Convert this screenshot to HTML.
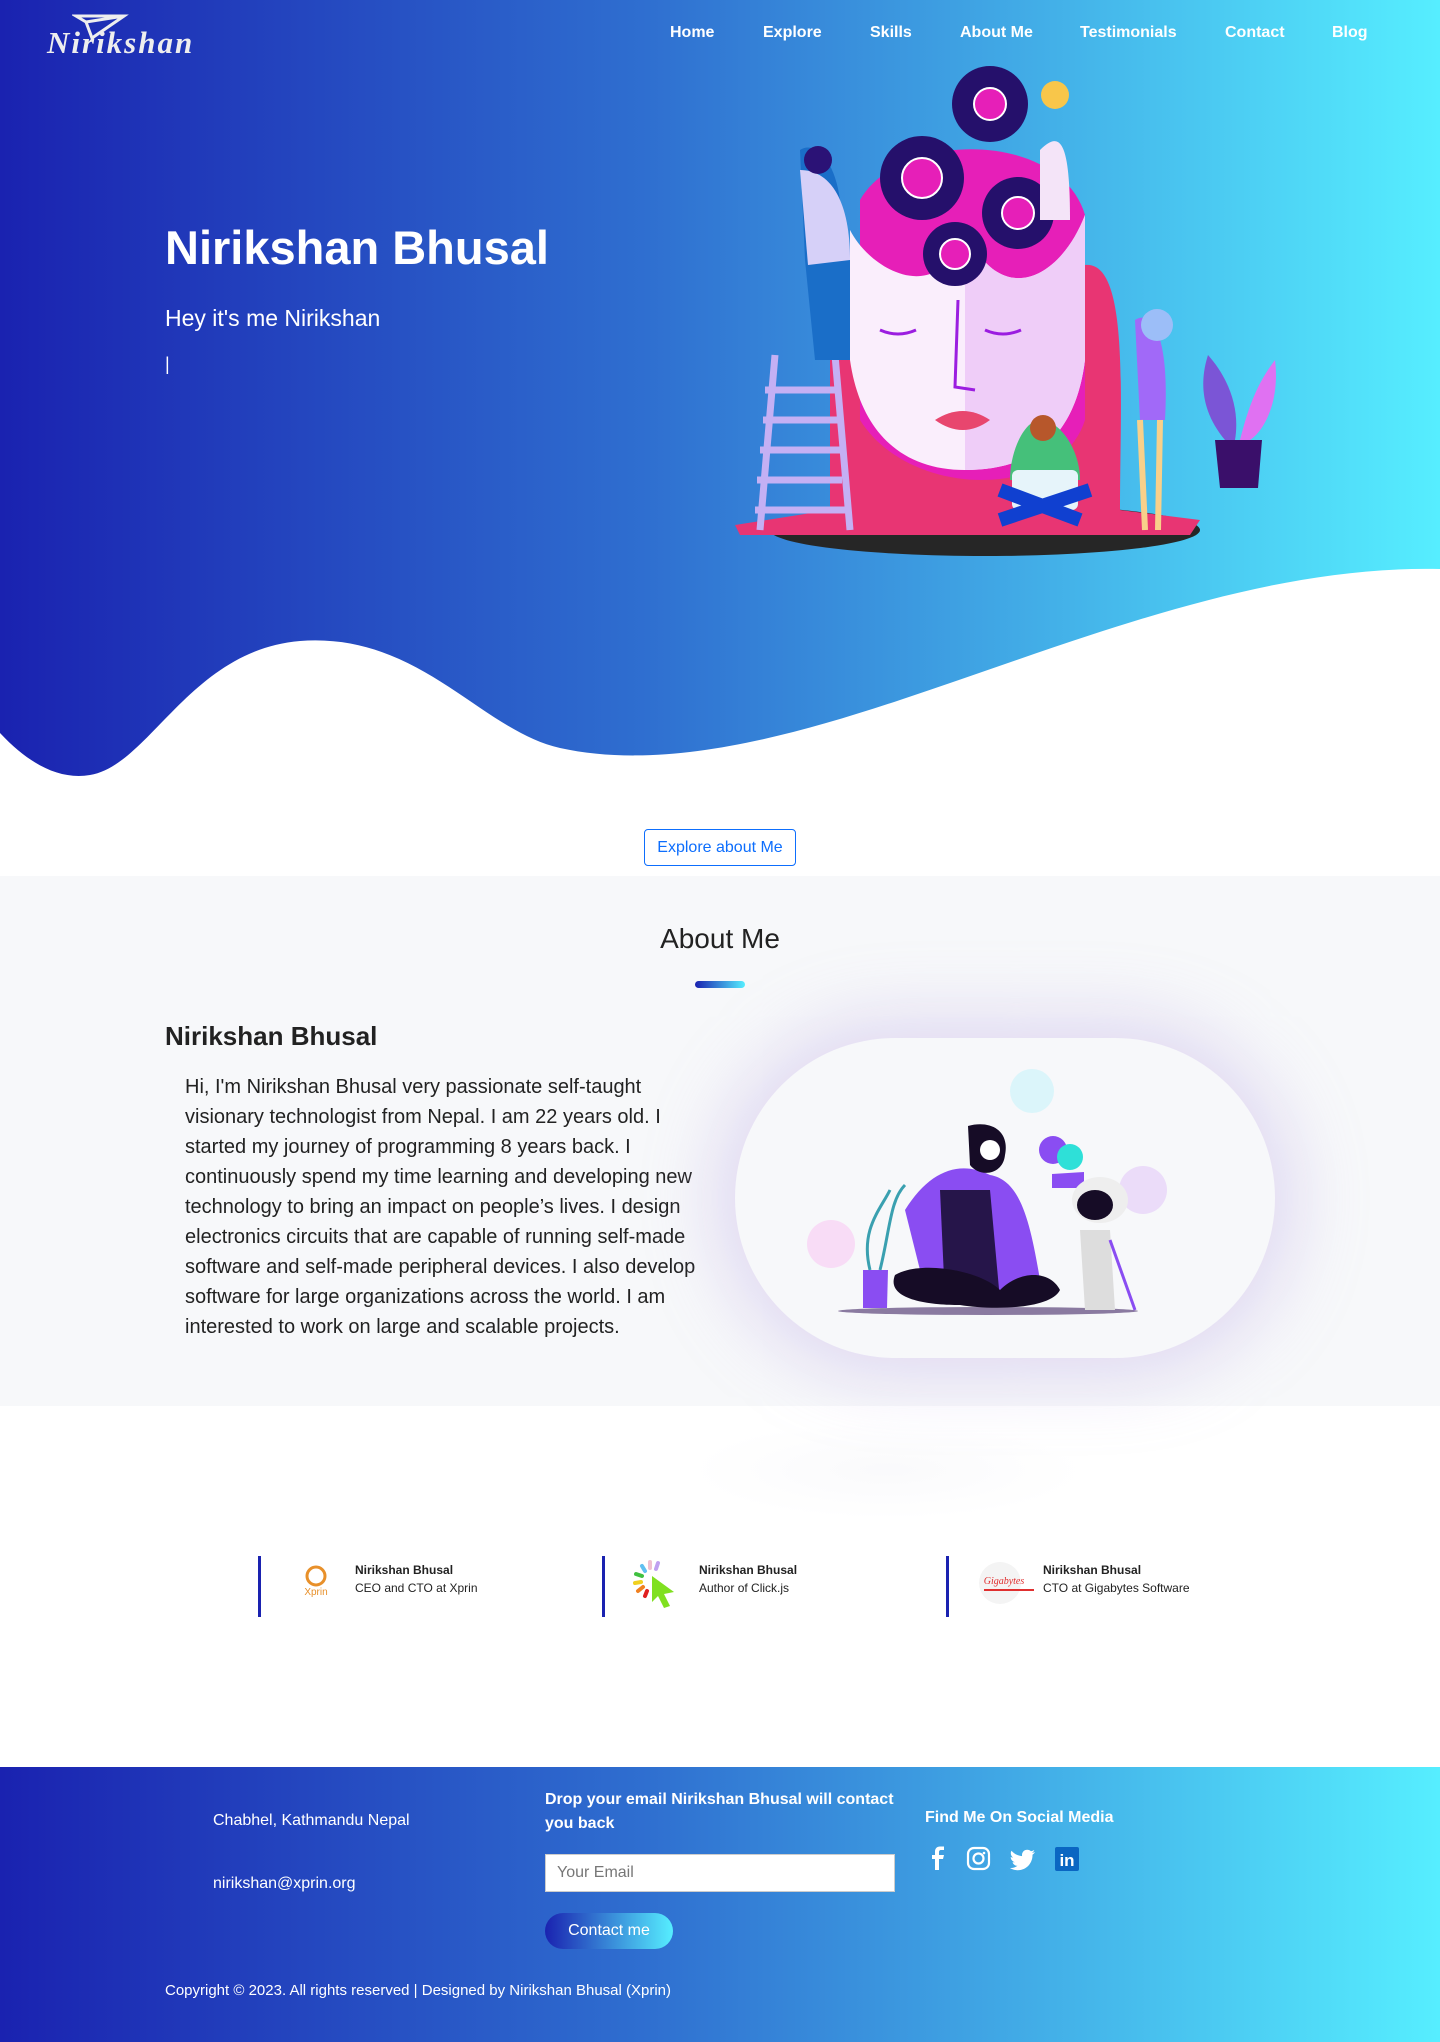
<!DOCTYPE html>
<html><head><meta charset="utf-8">
<style>
*{margin:0;padding:0;box-sizing:border-box}
body{width:1440px;height:2042px;font-family:"Liberation Sans",sans-serif;background:#fff;position:relative;overflow:hidden;color:#212529}
.abs{position:absolute}
.grad{background:linear-gradient(90deg,#1a22b0 0%,#2f6fd0 45%,#56eeff 100%)}
.nav a{position:absolute;top:24px;color:#fff;font-weight:bold;font-size:16px;text-decoration:none}
</style></head><body>
<div class="abs grad" style="left:0;top:0;width:1440px;height:800px"></div>
<svg class="abs" style="left:0;top:560px" width="1440" height="260" viewBox="0 560 1440 260">
<path d="M0 733 C30 765 60 780 90 775 C150 765 190 650 300 641 C420 632 480 730 560 748 C660 770 780 740 900 700 C1080 640 1260 565 1440 569 L1440 820 L0 820 Z" fill="#fff"/>
</svg>
<!-- logo -->
<svg class="abs" style="left:72px;top:12px" width="60" height="30"><path d="M4 4 L52 4 L20 26 L14 10 Z M14 10 L52 4" fill="none" stroke="#eee" stroke-width="3"/></svg>
<div class="abs" style="left:47px;top:25px;color:#eee;font:italic bold 31px 'Liberation Serif',serif;letter-spacing:2px">Nirikshan</div>
<div class="nav">
<a style="left:670px">Home</a><a style="left:763px">Explore</a><a style="left:870px">Skills</a><a style="left:960px">About Me</a><a style="left:1080px">Testimonials</a><a style="left:1225px">Contact</a><a style="left:1332px">Blog</a>
</div>
<div class="abs" style="left:165px;top:220px;color:#fff;font-size:47px;font-weight:bold">Nirikshan Bhusal</div>
<div class="abs" style="left:165px;top:305px;color:#fff;font-size:23px">Hey it's me Nirikshan</div>
<div class="abs" style="left:165px;top:354px;color:#fff;font-size:18px">|</div>
<!-- hero illustration -->
<svg class="abs" style="left:730px;top:60px" width="560" height="510" viewBox="730 60 560 510">
<ellipse cx="985" cy="530" rx="215" ry="26" fill="#262626"/>
<path d="M1085 265 C1130 260 1120 400 1120 510 L1200 520 L1190 535 L740 535 L735 525 L830 510 L830 300 Z" fill="#e83573"/>
<path d="M860 200 C900 130 1060 130 1085 215 L1085 420 C1060 500 910 500 860 420 Z" fill="#e61fb8"/>
<path d="M850 230 C870 270 940 310 965 230 C1000 310 1060 280 1085 215 L1085 360 C1075 440 1030 470 965 470 C900 470 860 430 850 360 Z" fill="#faeefc"/>
<path d="M965 230 C1000 310 1060 280 1085 215 L1085 360 C1075 440 1030 470 965 470 Z" fill="#efcdf8"/>
<path d="M935 420 Q963 402 990 420 Q963 440 935 420Z" fill="#e8466e"/>
<path d="M880 330 q18 8 36 0 M985 330 q18 8 36 0 M958 300 L955 387 L975 390" stroke="#9b1de0" stroke-width="3" fill="none"/>
<g fill="#25106b"><circle cx="922" cy="178" r="42"/><circle cx="990" cy="104" r="38"/><circle cx="1018" cy="213" r="36"/><circle cx="955" cy="254" r="32"/></g>
<g fill="#e61fb8" stroke="#fff" stroke-width="2"><circle cx="922" cy="178" r="20"/><circle cx="990" cy="104" r="16"/><circle cx="1018" cy="213" r="16"/><circle cx="955" cy="254" r="15"/></g>
<path d="M775 355 L760 530 M835 355 L850 530 M765 390h70 M763 420h75 M760 450h80 M757 480h85 M755 510h90" stroke="#c4b0f4" stroke-width="7" fill="none"/>
<path d="M800 150 C815 140 835 160 840 200 L850 260 L850 360 L815 360 L805 260 Z" fill="#1a6ec8"/>
<path d="M800 170 C830 170 850 200 850 260 L808 265 Z" fill="#d6d0f8"/>
<circle cx="818" cy="160" r="14" fill="#2b1276"/>
<path d="M1040 150 C1060 130 1070 140 1070 220 L1040 220 Z" fill="#f4e4f8"/><circle cx="1055" cy="95" r="14" fill="#f8c64a"/>
<path d="M1135 320 C1150 310 1170 330 1165 420 L1140 420 Z" fill="#a169f8"/><path d="M1140 420 L1145 530 M1160 420 L1158 530" stroke="#f8d08a" stroke-width="6"/>
<circle cx="1157" cy="325" r="16" fill="#9cbef8"/>
<path d="M1040 420 C1060 420 1080 450 1080 480 L1010 480 C1010 450 1025 420 1040 420 Z" fill="#45c07a"/>
<rect x="1012" y="470" width="66" height="40" rx="6" fill="#e6f4fa"/>
<path d="M1000 520 L1090 490 M1080 520 L1000 490" stroke="#1040d0" stroke-width="14"/>
<circle cx="1043" cy="428" r="13" fill="#b7572b"/>
<path d="M1215 440 L1262 440 L1258 488 L1220 488 Z" fill="#3a0f6a"/>
<path d="M1225 440 C1200 410 1200 380 1208 355 C1230 380 1240 410 1235 440 Z" fill="#7b55d6"/>
<path d="M1240 440 C1250 400 1260 380 1275 360 C1280 400 1265 430 1250 440 Z" fill="#e071f2"/>
</svg>
<!-- Explore button -->
<div class="abs" style="left:644px;top:829px;width:152px;height:37px;border:1px solid #0d6efd;border-radius:4px;color:#0d6efd;font-size:16px;text-align:center;line-height:35px">Explore about Me</div>
<!-- About section -->
<div class="abs" style="left:0;top:876px;width:1440px;height:530px;background:#f7f8fa"></div>
<div class="abs" style="left:0;top:923px;width:1440px;text-align:center;font-size:28px;color:#222">About Me</div>
<div class="abs" style="left:695px;top:981px;width:50px;height:7px;border-radius:4px;background:linear-gradient(90deg,#1a22b0,#56eeff)"></div>
<div class="abs" style="left:165px;top:1021px;font-size:26px;font-weight:bold;color:#222">Nirikshan Bhusal</div>
<div class="abs" style="left:185px;top:1072px;width:525px;font-size:20px;line-height:30px;color:#222">Hi, I'm Nirikshan Bhusal very passionate self-taught visionary technologist from Nepal. I am 22 years old. I started my journey of programming 8 years back. I continuously spend my time learning and developing new technology to bring an impact on people’s lives. I design electronics circuits that are capable of running self-made software and self-made peripheral devices. I also develop software for large organizations across the world. I am interested to work on large and scalable projects.</div>
<div class="abs" style="left:735px;top:1038px;width:540px;height:320px;border-radius:160px;background:#f7f8fa;box-shadow:0 0 70px 20px rgba(180,160,225,0.35)"></div>
<svg class="abs" style="left:735px;top:1038px" width="540" height="320" viewBox="735 1038 540 320">
<circle cx="1032" cy="1091" r="22" fill="#c8f4fa" opacity=".6"/><circle cx="1143" cy="1190" r="24" fill="#e6d0f8" opacity=".7"/><circle cx="831" cy="1244" r="24" fill="#f8d0f4" opacity=".7"/>
<ellipse cx="988" cy="1311" rx="150" ry="4" fill="#8a7aa0"/>
<path d="M1052 1174 l32 -2 l0 16 l-32 0z" fill="#8a4df2"/><circle cx="1053" cy="1150" r="14" fill="#8a4df2"/><circle cx="1070" cy="1157" r="13" fill="#2ee0d8"/>
<path d="M863 1308 L863 1270 L888 1270 L887 1308 Z" fill="#8a4df2"/>
<path d="M870 1270 C860 1230 880 1210 890 1190 M880 1270 C890 1230 890 1200 905 1185" stroke="#3aa0b0" stroke-width="3" fill="none"/>
<path d="M905 1210 C930 1170 960 1160 990 1175 C1020 1180 1030 1220 1040 1280 L1000 1290 L960 1280 L920 1270 Z" fill="#8a4df2"/>
<path d="M940 1190 L990 1190 L1000 1300 L945 1300 Z" fill="#26154a"/>
<path d="M895 1275 C920 1260 980 1270 1000 1290 C1020 1270 1050 1270 1060 1290 C1050 1310 990 1310 960 1305 C930 1305 885 1300 895 1275 Z" fill="#160c26"/>
<path d="M968 1126 C990 1120 1010 1130 1005 1155 C1003 1175 980 1178 970 1165 Z" fill="#160c26"/><circle cx="990" cy="1150" r="10" fill="#fff"/>
<ellipse cx="1100" cy="1200" rx="28" ry="23" fill="#eee"/><ellipse cx="1095" cy="1205" rx="18" ry="15" fill="#160c26"/>
<path d="M1080 1230 L1110 1230 L1115 1310 L1085 1310 Z" fill="#ddd"/><path d="M1110 1240 L1135 1310" stroke="#8a4df2" stroke-width="3"/>
</svg>
<!-- testimonials -->
<div class="abs" style="left:688px;top:1420px;width:400px;height:100px;border-radius:50%;background:radial-gradient(ellipse,rgba(235,235,242,0.25),rgba(255,255,255,0) 70%)"></div>
<div class="abs" style="left:258px;top:1556px;width:3px;height:61px;background:#1a22b0"></div>
<div class="abs" style="left:602px;top:1556px;width:3px;height:61px;background:#1a22b0"></div>
<div class="abs" style="left:946px;top:1556px;width:3px;height:61px;background:#1a22b0"></div>
<svg class="abs" style="left:295px;top:1562px" width="42" height="42"><circle cx="21" cy="14" r="9" fill="none" stroke="#e8902a" stroke-width="3"/><text x="21" y="33" font-size="10" fill="#e8902a" text-anchor="middle" font-family="Liberation Sans">Xprin</text></svg>
<svg class="abs" style="left:630px;top:1558px" width="50" height="52"><g stroke-width="4" stroke-linecap="round"><path d="M20 4v6" stroke="#f0c0d0"/><path d="M28 5l-2 6" stroke="#c0a0f0"/><path d="M12 8l3 5" stroke="#60c0f0"/><path d="M6 16l6 2" stroke="#40c040"/><path d="M5 25l6 -1" stroke="#f0d020"/><path d="M8 33l5 -4" stroke="#f08020"/><path d="M15 38l2 -5" stroke="#e02020"/></g><path d="M22 18 L44 34 L34 36 L40 48 L34 50 L28 38 L22 44 Z" fill="#80e020"/></svg>
<svg class="abs" style="left:974px;top:1562px" width="60" height="42"><circle cx="26" cy="21" r="21" fill="#f4f4f4"/><text x="30" y="22" font-size="10" fill="#e03030" font-style="italic" text-anchor="middle" font-family="Liberation Serif">Gigabytes</text><path d="M10 28h50" stroke="#e03030" stroke-width="2"/></svg>
<div class="abs" style="left:355px;top:1561px;font-size:12px;line-height:18px;color:#222"><b>Nirikshan Bhusal</b><br>CEO and CTO at Xprin</div>
<div class="abs" style="left:699px;top:1561px;font-size:12px;line-height:18px;color:#222"><b>Nirikshan Bhusal</b><br>Author of Click.js</div>
<div class="abs" style="left:1043px;top:1561px;font-size:12px;line-height:18px;color:#222"><b>Nirikshan Bhusal</b><br>CTO at Gigabytes Software</div>
<!-- footer -->
<div class="abs grad" style="left:0;top:1767px;width:1440px;height:275px"></div>
<div class="abs" style="left:213px;top:1812px;color:#fff;font-size:16px">Chabhel, Kathmandu Nepal</div>
<div class="abs" style="left:213px;top:1875px;color:#fff;font-size:16px">nirikshan@xprin.org</div>
<div class="abs" style="left:545px;top:1788px;width:360px;color:#fff;font-size:16px;font-weight:bold;line-height:24px">Drop your email Nirikshan Bhusal will contact you back</div>
<div class="abs" style="left:545px;top:1854px;width:350px;height:38px;background:#fff;border:1px solid #ccc;color:#777;font-size:16px;padding:9px 11px">Your Email</div>
<div class="abs" style="left:545px;top:1913px;width:128px;height:36px;border-radius:18px;background:linear-gradient(90deg,#1a22b0,#56eeff);color:#fff;font-size:16px;text-align:center;line-height:36px">Contact me</div>
<div class="abs" style="left:925px;top:1809px;color:#fff;font-size:16px;font-weight:bold">Find Me On Social Media</div>
<svg class="abs" style="left:925px;top:1846px" width="160" height="26" viewBox="0 0 160 26">
<path d="M14 24V13h4l1-4h-5V6c0-1 0.5-2 2-2h3V0.5h-4c-3 0-5 2-5 5V9H7v4h3v11z" fill="#fff"/>
<rect x="43" y="2" width="21" height="21" rx="6" fill="none" stroke="#fff" stroke-width="2.2"/><circle cx="53.5" cy="12.5" r="5" fill="none" stroke="#fff" stroke-width="2.2"/><circle cx="59" cy="7" r="1.3" fill="#fff"/>
<path d="M110 6c-1 .5-2 .7-3 .8 1-.6 2-1.6 2.3-2.8-1 .6-2 1-3.3 1.3-1-1-2.3-1.6-3.8-1.6-3 0-5.2 2.4-5.2 5.2 0 .4 0 .8.1 1.2-4.3-.2-8-2.300-10.6-5.4-.5.8-.7 1.7-.7 2.6 0 1.8.9 3.4 2.3 4.3-.9 0-1.7-.3-2.4-.6 0 2.5 1.8 4.6 4.2 5.1-.4.1-.9.2-1.4.2-.3 0-.7 0-1-.1.7 2 2.6 3.6 4.9 3.6-1.8 1.4-4 2.2-6.5 2.2-.4 0-.8 0-1.2-.1 2.3 1.5 5.1 2.3 8 2.3 9.6 0 14.8-8 14.8-14.8v-.7c1-.7 1.9-1.7 2.6-2.7z" fill="#fff"/>
<rect x="130" y="1" width="24" height="24" rx="2" fill="#0a66c2"/><text x="142" y="20" font-size="17" font-weight="bold" fill="#fff" text-anchor="middle" font-family="Liberation Sans">in</text>
</svg>
<div class="abs" style="left:165px;top:1982px;color:#fff;font-size:15px">Copyright © 2023. All rights reserved | Designed by Nirikshan Bhusal (Xprin)</div>
</body></html>
